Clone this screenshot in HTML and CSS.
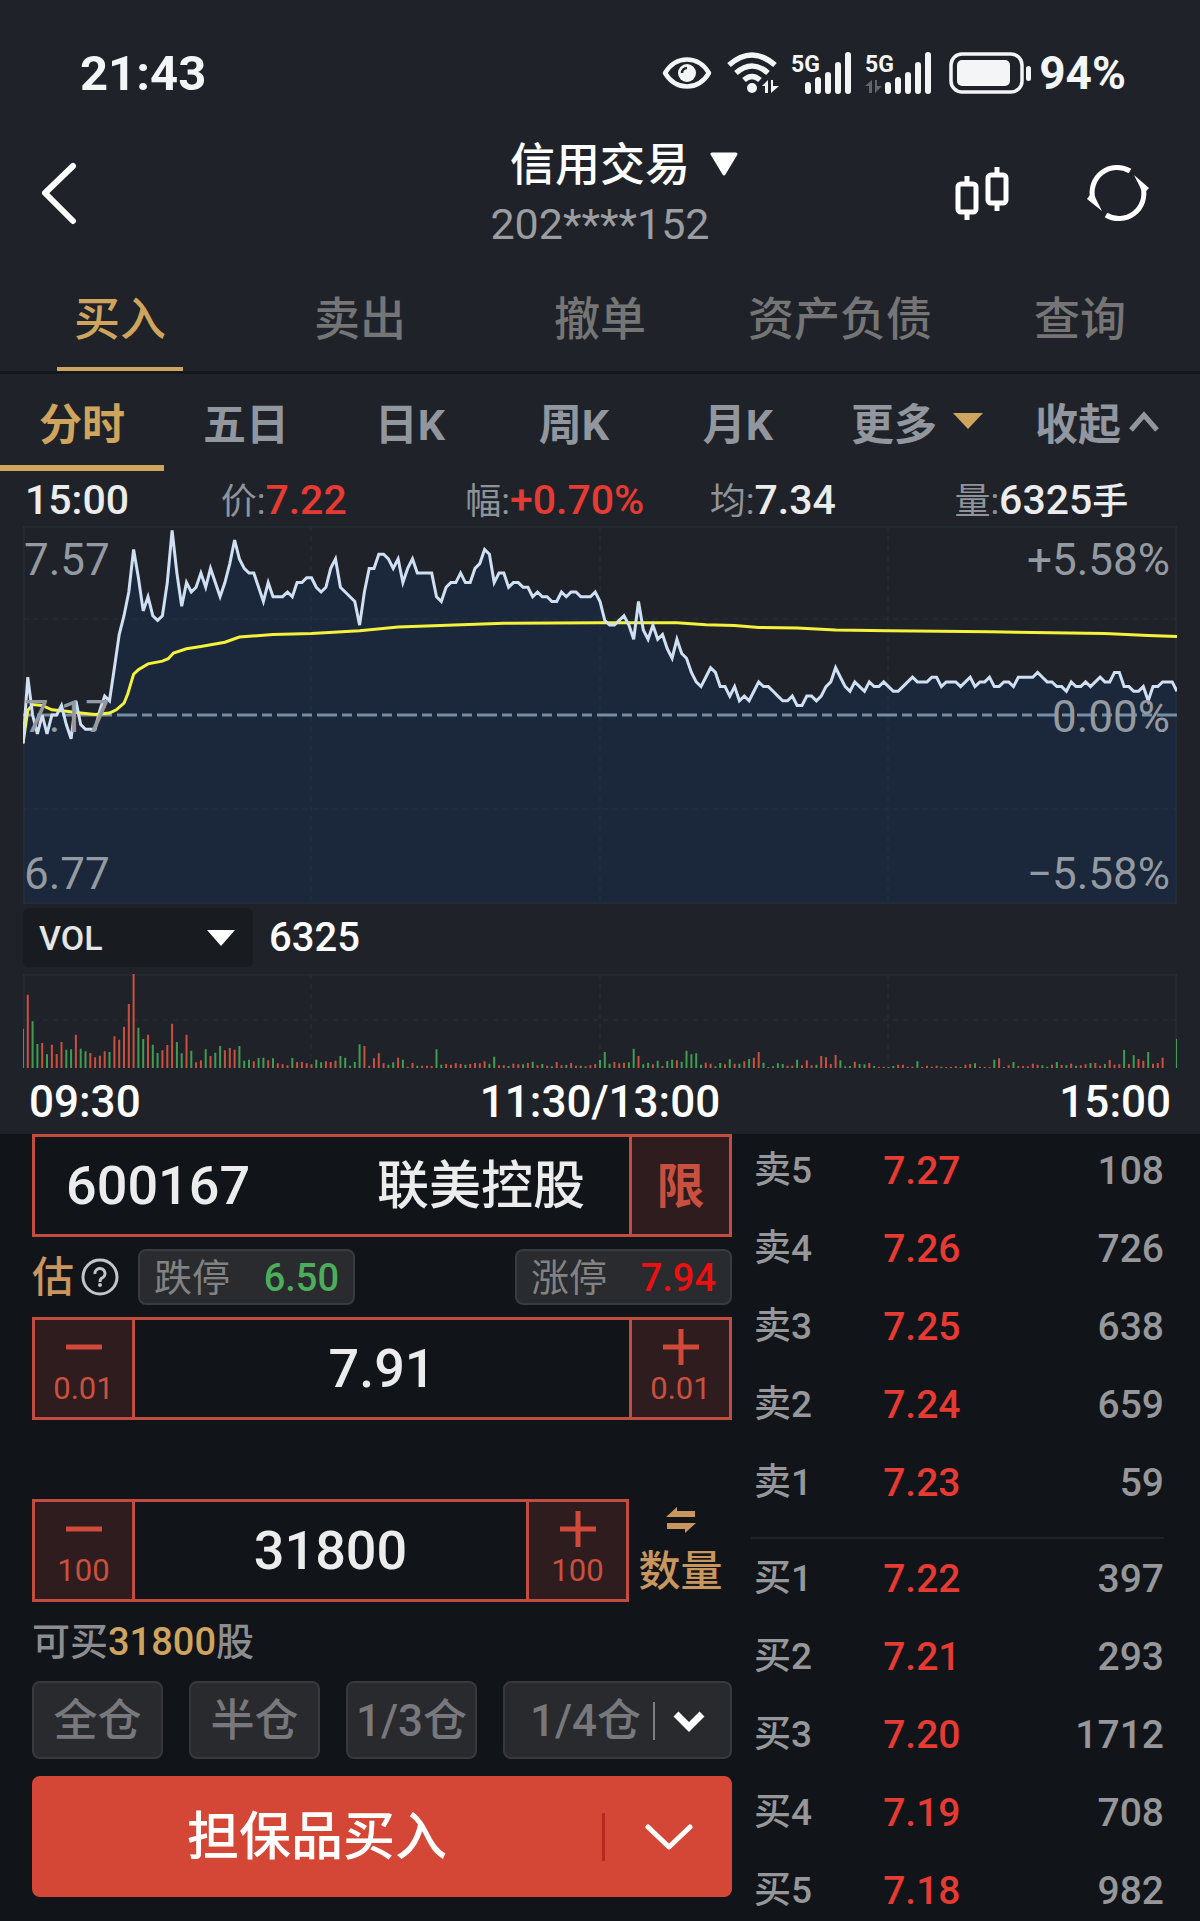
FILE: index.html
```html
<!DOCTYPE html>
<html lang="zh-CN">
<head>
<meta charset="UTF-8" />
<meta name="viewport" content="width=device-width, initial-scale=1" />
<title>信用交易</title>
<link rel="stylesheet" href="styles.css">
</head>
<body>
  <!-- 状态栏 -->
  <div class="status-bar">
    <span class="clock">21:43</span>
    <div class="status-icons">
      <svg width="50" height="34" viewBox="0 0 50 34">
        <path d="M3 17C14-1 36-1 47 17C36 35 14 35 3 17Z" fill="none" stroke="#f3f5f6" stroke-width="4.5" stroke-linejoin="round"/>
        <circle cx="25" cy="17" r="9" fill="#f3f5f6"/>
        <path d="M20 17a5 5 0 0 1 5-5" fill="none" stroke="#1f2329" stroke-width="2.5"/>
      </svg>
      <svg class="wifi" width="52" height="42" viewBox="0 0 52 42">
        <g fill="none" stroke="#f3f5f6" stroke-width="5.5">
          <path d="M2 13Q25-7 48 13"/>
          <path d="M9 21Q25 7 41 21"/>
          <path d="M17 28Q25 21 33 28"/>
        </g>
        <circle cx="25" cy="36" r="5" fill="#f3f5f6"/>
        <path d="M41 28v13h-3v-7h-3zM44 41V28h2v6h6z" fill="#f3f5f6"/>
      </svg>
      <svg class="signal" width="62" height="50" viewBox="0 -4 62 50">
        <text x="0" y="20">5G</text>
        <path d="M17 33v6M27 28v11M37 23v16M47 13v26M57 3v36"/>
      </svg>
      <svg class="signal second" width="68" height="50" viewBox="0 -4 68 50">
        <text x="0" y="20">5G</text>
        <path class="dim" d="M7 28v13H4v-7H0zM10 41V28h2v6h5z"/>
        <path d="M23 33v6M33 28v11M43 23v16M53 13v26M63 3v36"/>
      </svg>
      <svg class="battery" width="84" height="42" viewBox="0 0 84 42">
        <rect x="2" y="2" width="71" height="38" rx="11" fill="none" stroke="#f3f5f6" stroke-width="3.5"/>
        <rect x="8" y="8" width="53" height="26" rx="5" fill="#f3f5f6"/>
        <rect x="77" y="14" width="5" height="15" rx="2.5" fill="#f3f5f6"/>
      </svg>
      <span class="percent">94%</span>
    </div>
  </div>

  <!-- 标题 -->
  <header class="title-bar">
    <button class="icon-btn" aria-label="返回">
      <svg width="38" height="64" viewBox="0 0 38 64"><path d="M33 5L5 32L33 60" fill="none" stroke="#fff" stroke-width="6" stroke-linecap="round" stroke-linejoin="round"/></svg>
    </button>
    <div class="title">
      <button class="account">信用交易
        <svg width="28" height="24" viewBox="0 0 28 24"><path d="M2 2H26L14 22Z" fill="#fff" stroke="#fff" stroke-width="3" stroke-linejoin="round"/></svg>
      </button>
      <span class="account-no">202****152</span>
    </div>
    <div class="title-actions">
      <button class="icon-btn" aria-label="K线">
        <svg width="56" height="56" viewBox="0 0 56 56" fill="none" stroke="#fff" stroke-width="5">
          <rect x="4" y="19" width="18" height="28" rx="3"/>
          <rect x="34" y="10" width="18" height="28" rx="3"/>
          <path d="M13 11v8M13 47v8M43 2v8M43 38v8"/>
        </svg>
      </button>
      <button class="icon-btn" aria-label="刷新">
        <svg width="64" height="58" viewBox="0 0 64 58">
          <g fill="none" stroke="#fff" stroke-width="5">
            <path d="M7 35A25 25 0 0 1 44 7"/>
            <path d="M57 23A25 25 0 0 1 20 51"/>
          </g>
          <path d="M1 35L4 31L9 33L16 47ZM63 24L60 27L55 25L48 11Z" fill="#fff"/>
        </svg>
      </button>
    </div>
  </header>

  <!-- 主菜单 -->
  <nav class="main-nav">
    <button class="active"><span>买入</span></button>
    <button><span>卖出</span></button>
    <button><span>撤单</span></button>
    <button><span>资产负债</span></button>
    <button><span>查询</span></button>
  </nav>

  <!-- 周期 -->
  <nav class="period-nav">
    <button class="active">分时</button>
    <button>五日</button>
    <button>日K</button>
    <button>周K</button>
    <button>月K</button>
    <button class="wide">更多
      <svg width="30" height="16" viewBox="0 0 30 16"><path d="M0 0H30L15 16Z" fill="#cfa55d"/></svg>
    </button>
    <button class="wide fold">收起
      <svg width="30" height="22" viewBox="0 0 30 22"><path d="M2 20L15 5L28 20" fill="none" stroke="#92969e" stroke-width="5"/></svg>
    </button>
  </nav>

  <section class="chart">
    <div class="quote">
      <span>15:00</span>
      <span><label>价:</label><b class="red">7.22</b></span>
      <span><label>幅:</label><b class="red">+0.70%</b></span>
      <span><label>均:</label><b>7.34</b></span>
      <span><label>量:</label><b>6325<i>手</i></b></span>
    </div>

    <div class="price-chart">
      <svg id="priceChart" viewBox="0 0 1154 378" preserveAspectRatio="none">
        <path id="priceArea" class="area" />
        <path class="grid" d="M0 1H1154M0 377H1154M1 0V378M1153 0V378" />
        <path class="grid dash" d="M0 93H1154M0 283H1154M288 0V378M577 0V378M865 0V378" />
        <path class="base" d="M0 189H1154" />
        <path id="avgLine" class="avg" />
        <path id="priceLine" class="price" />
      </svg>
      <div class="scale left"><span>7.57</span><span>7.17</span><span>6.77</span></div>
      <div class="scale right"><span>+5.58%</span><span>0.00%</span><span>−5.58%</span></div>
    </div>

    <div class="indicator">
      <div class="select-box">
        <select aria-label="指标"><option>VOL</option></select>
        <svg width="28" height="16" viewBox="0 0 28 16"><path d="M0 0H28L14 16Z" fill="#fff"/></svg>
      </div>
      <span>6325</span>
    </div>

    <div class="volume-chart">
      <svg viewBox="0 0 1154 94" preserveAspectRatio="none">
        <path class="grid" d="M0 1H1154M1 0V94M1153 0V94" />
        <path class="grid dash" d="M0 46H1154M288 0V94M577 0V94M865 0V94" />
        <path id="volUp" class="up" />
        <path id="volDown" class="down" />
      </svg>
    </div>

    <div class="time-axis"><span>09:30</span><span>11:30/13:00</span><span>15:00</span></div>
  </section>

  <main>
    <form class="order">
      <div class="box">
        <input class="code" type="text" value="600167" aria-label="证券代码" />
        <span class="stock-name">联美控股</span>
        <button type="button" class="side limit">限</button>
      </div>

      <div class="limits">
        <a href="#">估</a>
        <svg width="40" height="40" viewBox="0 0 40 40">
          <circle cx="20" cy="20" r="17" fill="none" stroke="#c4c5c9" stroke-width="3"/>
          <path d="M15 17a5 5 0 1 1 7 4q-2 1-2 4" fill="none" stroke="#c4c5c9" stroke-width="3"/>
          <circle cx="20" cy="28" r="2" fill="#c4c5c9"/>
        </svg>
        <button type="button" class="pill">跌停<b class="green">6.50</b></button>
        <button type="button" class="pill up-limit">涨停<b class="pure-red">7.94</b></button>
      </div>

      <div class="box">
        <button type="button" class="side"><svg width="36" height="36" viewBox="0 0 36 36"><path d="M0 18H36"/></svg>0.01</button>
        <input type="text" value="7.91" aria-label="价格" />
        <button type="button" class="side"><svg width="36" height="36" viewBox="0 0 36 36"><path d="M0 18H36M18 0V36"/></svg>0.01</button>
      </div>

      <div class="amount">
        <div class="box">
          <button type="button" class="side"><svg width="36" height="36" viewBox="0 0 36 36"><path d="M0 18H36"/></svg>100</button>
          <input type="text" value="31800" aria-label="数量" />
          <button type="button" class="side"><svg width="36" height="36" viewBox="0 0 36 36"><path d="M0 18H36M18 0V36"/></svg>100</button>
        </div>
        <button type="button" class="switch">
          <svg width="30" height="28" viewBox="0 0 30 28"><path d="M0 11L11 1V5H29V11ZM30 17L19 27V23H1V17Z" fill="#c9965f"/></svg>
          数量
        </button>
      </div>

      <p class="available">可买<b>31800</b>股</p>

      <div class="positions">
        <button type="button">全仓</button>
        <button type="button">半仓</button>
        <button type="button">1/3仓</button>
        <button type="button" class="more">1/4仓<i></i>
          <svg width="32" height="22" viewBox="0 0 32 22"><path d="M3 4L16 17L29 4" fill="none" stroke="#fff" stroke-width="7"/></svg>
        </button>
      </div>

      <div class="submit">
        <button type="button" class="buy">担保品买入</button>
        <button type="button" class="buy-more" aria-label="更多买入方式">
          <svg width="48" height="28" viewBox="0 0 48 28"><path d="M3 4L24 24L45 4" fill="none" stroke="#fff" stroke-width="5" stroke-linecap="round" stroke-linejoin="round"/></svg>
        </button>
      </div>
    </form>

    <!-- 五档 -->
    <div class="book">
      <table id="asks"></table>
      <hr />
      <table id="bids"></table>
    </div>
  </main>

<script>
  // 每分钟价格：与昨收 7.17 的差值（分）
  const prices = [
    -6,8,0,-4,0,-4,0,0,2,-2,-5,3,-2,-3,-3,-3,1,4,3,10,17,21,26,35,29,22,25,21,20,21,
    28,39,30,23,28,26,27,30,27,31,28,25,28,32,37,33,31,30,30,27,24,28,25,25,25,26,25,28,28,29,
    29,27,26,27,31,33,27,26,25,24,19,26,31,31,34,34,33,31,33,28,31,33,30,30,30,30,25,24,27,28,
    28,30,28,28,31,32,35,34,28,30,30,27,28,28,27,27,25,26,25,25,24,24,26,25,26,26,25,25,25,26,
    24,20,19,19,20,21,19,16,24,18,16,19,16,17,14,12,16,13,12,9,7,6,8,10,9,6,6,4,6,3,
    4,3,5,7,6,6,5,4,3,3,4,2,2,4,4,3,4,6,7,10,8,6,5,7,6,5,7,6,6,7,
    6,5,5,6,7,8,7,7,7,8,8,6,7,7,7,6,7,8,6,7,7,8,6,6,7,7,6,8,8,8,
    8,9,8,7,7,6,6,5,7,6,6,7,6,7,8,7,7,9,9,6,6,5,5,6,3,6,6,7,7,7,5
  ];

  // 均价线：[分钟, 差值]
  const avg = [
    [0,-6],[1,1],[2,2.2],[4,2],[6,1.1],[9,.8],[11,.5],[15,.1],[18,.4],[19.4,1.1],[21,2.5],[21.8,4.5],
    [22.4,6.6],[23,8.6],[24,9.6],[26,10.8],[29,11.4],[30.2,11.9],[31.3,13.1],[34,14],[37,14.5],[42,15.4],
    [45,16.5],[52,17],[60,17.2],[70,17.8],[78,18.6],[100,19.4],[120,19.5],[136,19.5],[142,19.1],[148,18.9],
    [153,18.5],[161,18.4],[169,18],[180,17.8],[201,17.6],[225,17.2],[234,16.8],[240,16.6]
  ];

  // 成交量：r 涨 g 跌
  const volumes = `g118 r220 g140 g72 r75 g41 r70 r42 r78 g55 g56 r100 g58 g50 r45 r32 r37 r50 g48 r95
    r85 r124 r192 r283 g121 g87 r100 g70 g45 r53 r69 r133 g78 g44 r100 g52 r17 r23 g56 r36
    g46 g66 r53 r60 r55 g66 g22 g25 r20 g30 g31 r23 g29 r14 r11 r8 g30 r18 r18 r14
    r11 g25 g17 r20 r18 r22 g36 g31 g7 g18 g71 r66 r7 r29 r44 r14 g10 g17 r31 g25
    r4 r15 g7 r7 r7 r6 g56 g10 r12 r10 r14 r12 g10 r12 r15 r14 r20 g13 g34 r8
    r8 g6 r13 r11 g11 r15 g19 r8 g12 r7 g5 r18 r8 g9 r15 r7 g7 r5 r8 r12
    g24 g48 g13 r18 r14 r16 g17 g58 r36 g11 g16 r11 g22 r6 g21 g25 r23 g19 g52 g41
    g44 g10 r16 r13 g5 g15 r11 g26 r13 g13 r20 g27 r31 r48 g16 g3 g5 g14 g12 r7
    r7 g25 r8 r23 r8 g10 r36 r32 r12 r39 g23 g5 g6 r19 g12 g11 r15 g6 r4 r4
    g3 g6 r10 r10 r4 r4 g20 r3 r7 r4 r7 g4 r3 r3 r5 g3 r10 r12 g14 r4
    r3 r3 g25 r29 r3 r8 g18 r6 r6 r5 r13 r10 g8 g4 r10 g18 r9 g8 r13 g7
    r8 r11 g15 r15 r7 g12 r24 r10 r11 g54 r12 g38 r27 r22 g48 r13 r15 r31 g0 g0 g88`.split(/\s+/);

  const asks = [["卖5","7.27",108],["卖4","7.26",726],["卖3","7.25",638],["卖2","7.24",659],["卖1","7.23",59]];
  const bids = [["买1","7.22",397],["买2","7.21",293],["买3","7.20",1712],["买4","7.19",708],["买5","7.18",982]];

  const x = i => (i * 1154 / 240).toFixed(1);
  const y = v => (189 - v * 4.73).toFixed(1);

  function setPath(id, d) {
    document.getElementById(id).setAttribute("d", d);
  }

  function renderCharts() {
    const line = "M" + prices.map((p, i) => x(i) + " " + y(p)).join("L");
    setPath("priceLine", line);
    setPath("priceArea", line + "L1154 378L0 378Z");
    setPath("avgLine", "M" + avg.map(p => x(p[0]) + " " + y(p[1])).join("L"));

    let up = "", down = "";
    volumes.forEach((v, i) => {
      const bar = "M" + x(i) + " 94V" + (94 - v.slice(1) / 3).toFixed(1);
      if (v[0] === "r") up += bar;
      else down += bar;
    });
    setPath("volUp", up);
    setPath("volDown", down);
  }

  function renderBook(id, rows) {
    document.getElementById(id).innerHTML = rows.map(r =>
      `<tr><th scope="row">${r[0]}</th><td class="red">${r[1]}</td><td class="qty">${r[2]}</td></tr>`
    ).join("");
  }

  renderCharts();
  renderBook("asks", asks);
  renderBook("bids", bids);
</script>
</body>
</html>
```
FILE: styles.css
```css
* {
  box-sizing: border-box;
}
body {
  margin: 0;
  background: #111418;
  color: #fff;
  font-family: Roboto, "Noto Sans CJK SC", sans-serif;
  font-size: 40px;
  font-weight: 500;
}
button, input, select {
  font: inherit;
  color: inherit;
  background: none;
  border: none;
  border-radius: 0;
  margin: 0;
  padding: 0;
  outline: none;
}
button {
  cursor: pointer;
}
svg {
  display: block;
  flex: none;
}
b, i {
  font-weight: inherit;
  font-style: normal;
}
.red {
  color: #e63a33;
}
.green {
  color: #4cae5b;
}
.pure-red {
  color: #ec1010;
}

/* 顶部 */
.status-bar, .title-bar, .main-nav, .period-nav, .chart {
  background: #1f2329;
}
.status-bar {
  display: flex;
  justify-content: space-between;
  align-items: center;
  height: 134px;
  padding: 12px 74px 0 80px;
  color: #f3f5f6;
}
.clock {
  font-size: 49px;
  font-weight: 700;
}
.status-icons {
  display: flex;
  align-items: center;
}
.wifi {
  margin-left: 15px;
}
.signal {
  margin-left: 12px;
  fill: none;
  stroke: #f3f5f6;
  stroke-width: 6;
  stroke-linecap: round;
}
.signal text {
  font-size: 23px;
  font-weight: 700;
  fill: #f3f5f6;
  stroke: none;
}
.signal .dim {
  fill: #63666b;
  stroke: none;
}
.battery {
  margin-left: 16px;
}
.percent {
  margin-left: 6px;
  font-size: 46px;
  font-weight: 700;
}

.title-bar {
  display: grid;
  grid-template-columns: 1fr auto 1fr;
  align-items: center;
  padding: 0 40px 20px;
}
.icon-btn {
  justify-self: start;
}
.title {
  display: flex;
  flex-direction: column;
  align-items: center;
}
.account {
  position: relative;
  padding-top: 2px;
  font-size: 45px;
  line-height: 60px;
}
.account svg {
  position: absolute;
  left: calc(100% + 20px);
  top: 18px;
}
.account-no {
  font-size: 43px;
  font-weight: 400;
  line-height: 56px;
  color: #9b9da1;
}
.title-actions {
  display: flex;
  justify-content: flex-end;
  gap: 76px;
  padding-right: 10px;
}

.main-nav {
  display: flex;
  border-bottom: 3px solid #14171b;
}
.main-nav button {
  flex: 1;
  font-size: 46px;
  color: #757575;
}
.main-nav span {
  display: inline-block;
  padding: 0 17px;
  line-height: 95px;
  border-bottom: 4px solid transparent;
}
.main-nav .active {
  color: #cfa55d;
}
.main-nav .active span {
  border-color: #cfa55d;
}

.period-nav {
  display: flex;
  padding-right: 20px;
}
.period-nav button {
  flex: 164;
  height: 97px;
  padding-top: 2px;
  font-size: 43px;
  font-weight: 700;
  color: #92969e;
  border-bottom: 6px solid transparent;
}
.period-nav .active {
  color: #cfa55d;
  border-color: #cfa55d;
}
.period-nav .wide {
  flex: 194;
  display: flex;
  justify-content: center;
  align-items: center;
  gap: 16px;
}
.period-nav .fold {
  flex: 166;
  gap: 8px;
}

/* 分时图 */
.chart {
  padding: 0 23px;
}
.quote {
  display: grid;
  grid-template-columns: 196fr 245fr 245fr 245fr 223fr;
  height: 55px;
  padding-left: 2px;
  font-size: 41px;
  line-height: 59px;
  white-space: nowrap;
  color: #ececec;
}
.quote label {
  font-size: 36px;
  font-weight: 400;
  color: #8f949b;
}
.quote i {
  font-size: 36px;
}
.price-chart {
  position: relative;
}
.price-chart svg {
  width: 100%;
  height: 378px;
}
.volume-chart svg {
  width: 100%;
  height: 94px;
}
.chart path {
  vector-effect: non-scaling-stroke;
}
.area {
  fill: #1b273a;
}
.grid {
  fill: none;
  stroke: #2a3037;
  stroke-width: 1;
}
.grid.dash {
  stroke-dasharray: 5 5;
}
.base {
  stroke: #768ea3;
  stroke-width: 3;
  stroke-dasharray: 20 5 10 5;
  stroke-dashoffset: -14;
}
.avg {
  fill: none;
  stroke: #f4f23a;
  stroke-width: 3;
}
.price {
  fill: none;
  stroke: #cfe0f2;
  stroke-width: 3;
}
.up {
  stroke: #c8503f;
  stroke-width: 2;
}
.down {
  stroke: #3f9c50;
  stroke-width: 2;
}
.scale {
  position: absolute;
  top: 0;
  bottom: 0;
  display: flex;
  flex-direction: column;
  justify-content: space-between;
  padding: 12px 0 8px;
  font-size: 44px;
  font-weight: 400;
  line-height: 44px;
  color: #949aa1;
}
.left {
  left: 1px;
}
.right {
  right: 7px;
  text-align: right;
}
.indicator {
  display: flex;
  align-items: center;
  gap: 16px;
  margin: 4px 0 7px;
}
.select-box {
  position: relative;
  width: 230px;
  background: #181b1f;
  border-radius: 6px;
}
.select-box select {
  width: 100%;
  height: 59px;
  padding-left: 16px;
  font-size: 34px;
  appearance: none;
  color: #e6e6e6;
}
.select-box svg {
  position: absolute;
  right: 18px;
  top: 22px;
  pointer-events: none;
}
.time-axis {
  display: grid;
  grid-template-columns: 1fr auto 1fr;
  height: 66px;
  padding: 0 6px;
  font-size: 44px;
  line-height: 68px;
}
.time-axis span:last-child {
  text-align: right;
}

/* 下单 */
main {
  display: grid;
  grid-template-columns: minmax(0, 700fr) minmax(0, 413fr);
  gap: 19px;
  padding: 0 36px 0 32px;
}
.order {
  padding-bottom: 20px;
}
.box {
  display: flex;
  align-items: stretch;
  height: 103px;
  border: 3px solid #c34c40;
}
.box input {
  flex: 1;
  min-width: 0;
  text-align: center;
  font-size: 54px;
  color: #ececec;
}
.box .code {
  padding-left: 31px;
  text-align: left;
}
.stock-name {
  align-self: center;
  margin-right: 44px;
  padding-top: 3px;
  font-size: 52px;
  line-height: 60px;
  color: #ececec;
}
.side {
  display: flex;
  flex-direction: column;
  align-items: center;
  justify-content: center;
  flex: none;
  width: 100px;
  background: #2f1c1e;
  border-right: 3px solid #c34c40;
  font-size: 31px;
  font-weight: 400;
  line-height: 40px;
  color: #c9503f;
}
.side:last-child {
  border-right: none;
  border-left: 3px solid #c34c40;
}
.side svg {
  margin-bottom: 4px;
  stroke: #d14a39;
  stroke-width: 5;
}
.limit {
  padding-top: 3px;
  font-size: 48px;
  font-weight: 700;
}
.limits {
  display: flex;
  align-items: center;
  height: 56px;
  margin: 12px 0;
}
.limits a {
  margin-right: 6px;
  padding-top: 2px;
  font-size: 42px;
  line-height: 56px;
  color: #c9965f;
  text-decoration: none;
}
.pill {
  display: flex;
  align-items: center;
  justify-content: space-between;
  width: 217px;
  height: 56px;
  margin-left: 18px;
  padding: 2px 14px 0;
  font-size: 38px;
  line-height: 50px;
  font-weight: 400;
  color: #828282;
  background: #292b2f;
  border: 2px solid #383b3f;
  border-radius: 8px;
}
.pill b {
  font-weight: 500;
}
.up-limit {
  margin-left: auto;
}
.amount {
  display: flex;
  margin-top: 79px;
}
.amount .box {
  flex: 1;
  min-width: 0;
}
.switch {
  display: flex;
  flex-direction: column;
  align-items: center;
  justify-content: center;
  gap: 10px;
  width: 103px;
  padding-top: 4px;
  font-size: 42px;
  line-height: 56px;
  color: #c9965f;
}
.available {
  height: 54px;
  margin: 13px 0 12px;
  font-size: 38px;
  line-height: 55px;
  color: #8c8d90;
}
.available b {
  color: #cfa55d;
}
.positions {
  display: grid;
  grid-template-columns: minmax(0, 131fr) minmax(0, 131fr) minmax(0, 131fr) minmax(0, 229fr);
  gap: 26px;
}
.positions button {
  display: flex;
  align-items: center;
  justify-content: center;
  height: 78px;
  padding-top: 2px;
  font-size: 44px;
  line-height: 60px;
  color: #77777c;
  white-space: nowrap;
  background: #292a2e;
  border: 2px solid #37393d;
  border-radius: 8px;
}
.positions i {
  width: 2px;
  height: 38px;
  margin: 0 18px 0 12px;
  background: #7d7d82;
}
.submit {
  display: flex;
  align-items: center;
  height: 121px;
  margin-top: 17px;
  background: #d44737;
  border-radius: 8px;
}
.buy {
  flex: 1;
  padding-top: 2px;
  text-align: center;
  font-size: 52px;
  line-height: 119px;
}
.buy-more {
  display: flex;
  align-items: center;
  justify-content: center;
  width: 130px;
  height: 48px;
  border-left: 3px solid #b52a20;
}

/* 五档行情 */
.book {
  padding-top: 7px;
}
.book table {
  width: 100%;
  border-collapse: collapse;
  table-layout: fixed;
}
.book tr {
  height: 78px;
}
.book tr:last-child {
  height: 60px;
}
.book th, .book td {
  padding: 0;
  line-height: 60px;
  font-size: 39px;
  font-weight: 500;
  text-align: left;
  vertical-align: middle;
}
.book tr:not(:last-child) > * {
  padding-bottom: 18px;
}
.book th {
  width: 32%;
  padding-left: 3px;
  font-size: 37px;
  color: #96979a;
}
.book td.qty {
  text-align: right;
  color: #96979a;
}
.book hr {
  margin: 24px 0 10px;
  border: none;
  border-top: 2px solid #202328;
}
```
